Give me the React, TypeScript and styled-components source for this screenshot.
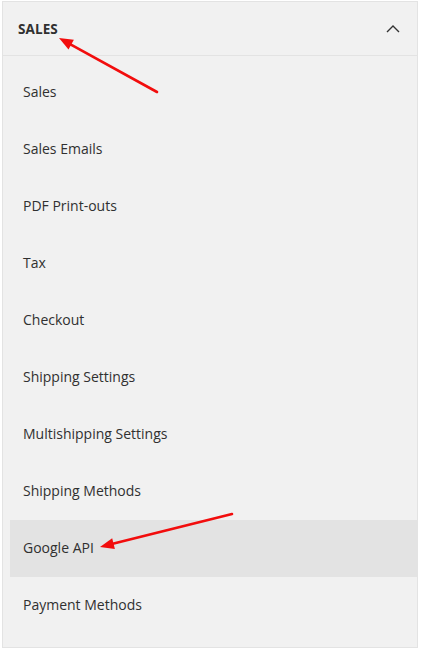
import styled, { createGlobalStyle } from "styled-components";

const GlobalStyle = createGlobalStyle`
  html, body {
    margin: 0;
    padding: 0;
    background: #ffffff;
  }
  body {
    font-family: "Open Sans", "Liberation Sans", sans-serif;
  }
`;

const Page = styled.div`
  position: relative;
  width: 423px;
  height: 655px;
  overflow: hidden;
  padding-top: 1px;
  box-sizing: border-box;
`;

const Panel = styled.div`
  margin-left: 2px;
  width: 416px;
  box-sizing: border-box;
  background: #f1f1f1;
  border: 1px solid #e3e3e3;
`;

const Header = styled.div`
  display: flex;
  align-items: center;
  justify-content: space-between;
  height: 53px;
  padding: 0 17px 0 15px;
  border-bottom: 1px solid #e3e3e3;
`;

const Title = styled.div`
  font-size: 13.5px;
  font-weight: 700;
  color: #303030;
  letter-spacing: 0.1px;
`;

const List = styled.ul`
  list-style: none;
  margin: 0;
  padding: 8px 0 13px 7px;
`;

const Item = styled.li<{ $active?: boolean }>`
  display: flex;
  align-items: center;
  height: 57px;
  padding: 0 0 2px 13px;
  box-sizing: border-box;
  font-size: 14px;
  color: #303030;
  background: ${({ $active }) => ($active ? "#e3e3e3" : "transparent")};
`;

const Overlay = styled.svg`
  position: absolute;
  left: 0;
  top: 0;
  pointer-events: none;
`;

const items = [
  "Sales",
  "Sales Emails",
  "PDF Print-outs",
  "Tax",
  "Checkout",
  "Shipping Settings",
  "Multishipping Settings",
  "Shipping Methods",
  "Google API",
  "Payment Methods",
];

const Arrow = ({ x1, y1, x2, y2 }: { x1: number; y1: number; x2: number; y2: number }) => {
  const angle = Math.atan2(y2 - y1, x2 - x1);
  const len = 15;
  const spread = 0.38;
  const a = [x2 - len * Math.cos(angle - spread), y2 - len * Math.sin(angle - spread)];
  const b = [x2 - len * Math.cos(angle + spread), y2 - len * Math.sin(angle + spread)];
  const bx = x2 - 10 * Math.cos(angle);
  const by = y2 - 10 * Math.sin(angle);
  return (
    <g>
      <line x1={x1} y1={y1} x2={bx} y2={by} stroke="#f20d0d" strokeWidth={2.6} strokeLinecap="round" />
      <polygon points={`${x2},${y2} ${a[0]},${a[1]} ${b[0]},${b[1]}`} fill="#f20d0d" />
    </g>
  );
};

export default function App() {
  return (
    <>
      <GlobalStyle />
      <Page>
        <Panel>
          <Header>
            <Title>SALES</Title>
            <svg width="14" height="9" viewBox="0 0 14 9">
              <polyline points="1,8 7,2 13,8" fill="none" stroke="#333" strokeWidth="1.4" />
            </svg>
          </Header>
          <List>
            {items.map((label) => (
              <Item key={label} $active={label === "Google API"}>
                {label}
              </Item>
            ))}
          </List>
        </Panel>
        <Overlay width="423" height="655">
          <Arrow x1={157} y1={92} x2={59} y2={38} />
          <Arrow x1={232} y1={514} x2={100} y2={547} />
        </Overlay>
      </Page>
    </>
  );
}
